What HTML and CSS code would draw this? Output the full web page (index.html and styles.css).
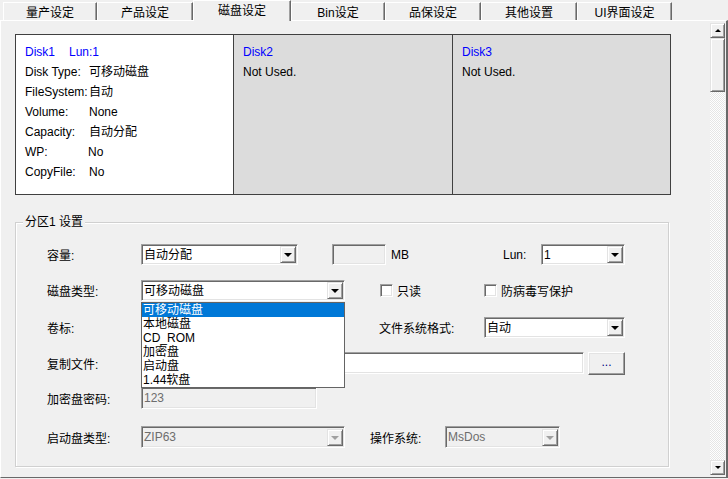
FILE: index.html
```html
<!DOCTYPE html>
<html lang="zh-CN">
<head>
<meta charset="utf-8">
<title>磁盘设定</title>
<link rel="stylesheet" href="styles.css">
</head>
<body>
<div class="window">
  <div class="tabs">
    <div class="tab w94">量产设定</div>
    <div class="tab w96">产品设定</div>
    <div class="tab active w98">磁盘设定</div>
    <div class="tab w94">Bin设定</div>
    <div class="tab w96">品保设定</div>
    <div class="tab w96">其他设置</div>
    <div class="tab w95">UI界面设定</div>
  </div>
  <div class="page">
    <div class="content">
      <div class="disks">
        <div class="disk disk-on">
          <div class="line blue"><span class="d1">Disk1</span>Lun:1</div>
          <div class="line"><span class="k">Disk Type:</span>可移动磁盘</div>
          <div class="line"><span class="k">FileSystem:</span>自动</div>
          <div class="line"><span class="k">Volume:</span>None</div>
          <div class="line"><span class="k">Capacity:</span>自动分配</div>
          <div class="line"><span class="k k2">WP:</span>No</div>
          <div class="line"><span class="k">CopyFile:</span>No</div>
        </div>
        <div class="disk disk-off">
          <div class="line blue">Disk2</div>
          <div class="line">Not Used.</div>
        </div>
        <div class="disk disk-off">
          <div class="line blue">Disk3</div>
          <div class="line">Not Used.</div>
        </div>
      </div>

      <div class="group">
        <div class="group-title">分区1 设置</div>

        <div class="row r1">
          <span class="lbl">容量:</span>
          <div class="combo w157"><span class="val">自动分配</span><span class="btn"><i class="tri"></i></span></div>
          <div class="edit disabled w54 gap34"></div>
          <span class="mb">MB</span>
          <span class="lun">Lun:</span>
          <div class="combo w84"><span class="val">1</span><span class="btn"><i class="tri"></i></span></div>
        </div>

        <div class="row r2">
          <span class="lbl">磁盘类型:</span>
          <div class="combo w204 has-list">
            <span class="val">可移动磁盘</span><span class="btn"><i class="tri"></i></span>
            <ul class="list">
              <li class="sel">可移动磁盘</li>
              <li>本地磁盘</li>
              <li>CD_ROM</li>
              <li>加密盘</li>
              <li>启动盘</li>
              <li>1.44软盘</li>
            </ul>
          </div>
          <span class="chk c1"></span><span class="ctext">只读</span>
          <span class="chk c2"></span><span class="ctext">防病毒写保护</span>
        </div>

        <div class="row r3">
          <span class="lbl">卷标:</span>
          <div class="edit w176"></div>
          <span class="lbl2">文件系统格式:</span>
          <div class="combo w141"><span class="val">自动</span><span class="btn"><i class="tri"></i></span></div>
        </div>

        <div class="row r4">
          <span class="lbl">复制文件:</span>
          <div class="edit w443 tall"></div>
          <div class="pbtn">...</div>
        </div>

        <div class="row r5">
          <span class="lbl">加密盘密码:</span>
          <div class="edit disabled w176 tall"><span class="val">123</span></div>
        </div>

        <div class="row r6">
          <span class="lbl">启动盘类型:</span>
          <div class="combo disabled w204 tall"><span class="val">ZIP63</span><span class="btn"><i class="tri"></i></span></div>
          <span class="lbl3">操作系统:</span>
          <div class="combo disabled w115 tall"><span class="val">MsDos</span><span class="btn"><i class="tri"></i></span></div>
        </div>
      </div>
    </div>

    <div class="scrollbar">
      <div class="sb-btn"><i class="arr up"></i></div>
      <div class="sb-thumb"></div>
      <div class="sb-track"></div>
      <div class="sb-btn"><i class="arr down"></i></div>
    </div>
  </div>
</div>
</body>
</html>
```

FILE: styles.css
```css
* { box-sizing: border-box; }
body {
  margin: 0;
  background: #f0f0f0;
  font: 12px "Liberation Sans", "Noto Sans CJK SC", sans-serif;
  color: #000;
}
.window { width: 728px; height: 479px; overflow: hidden; }

/* tabs */
.tabs {
  display: flex;
  align-items: flex-end;
  height: 20px;
  padding-left: 3px;
}
.tab {
  height: 18px;
  line-height: 18px;
  padding-top: 1px;
  text-align: center;
  font-size: 12px;
  background: #f0f0f0;
  border-top: 1px solid #fff;
  border-left: 1px solid #fff;
  border-right: 1px solid #696969;
  box-shadow: inset -1px 0 0 #a0a0a0;
}
.tab.active {
  height: 21px;
  line-height: 18px;
  margin-bottom: -1px;
  position: relative;
  z-index: 2;
}
.w94 { width: 94px; }
.w95 { width: 95px; }
.w96 { width: 96px; }
.w98 { width: 98px; }

/* page */
.page {
  display: flex;
  height: 458px;
  border-top: 1px solid #fff;
  border-left: 1px solid #fff;
  border-right: 2px solid #696969;
  border-bottom: 1px solid #696969;
}
.content { flex: 1; padding: 13px 0 0 14px; }

/* disks */
.disks {
  display: grid;
  grid-template-columns: 217px 219px 218px;
  width: 656px;
  height: 161px;
  border: 1px solid #404040;
}
.disk { padding: 7px 0 0 9px; }
.disk-on { background: #fff; }
.disk-off { background: #dcdcdc; border-left: 1px solid #404040; }
.line { height: 20px; line-height: 20px; white-space: nowrap; }
.blue { color: #0000ff; }
.d1 { display: inline-block; width: 44px; }
.k { display: inline-block; width: 64px; }
.k2 { width: 63px; }

/* group box */
.group {
  margin-top: 27px;
  width: 654px;
  height: 245px;
  border: 1px solid #d0d0d0;
  box-shadow: 1px 1px 0 #fff, inset 1px 1px 0 #fff;
  padding-left: 31px;
}
.group-title {
  display: block;
  width: max-content;
  margin: -8px 0 0 -24px;
  padding: 0 2px;
  height: 14px;
  line-height: 14px;
  background: #f0f0f0;
}

.row {
  display: flex;
  align-items: center;
  height: 21px;
  white-space: nowrap;
}
.r1 { margin-top: 15px; }
.r2 { margin-top: 15px; position: relative; z-index: 3; }
.r3 { margin-top: 16px; }
.r4 { margin-top: 14px; height: 22px; }
.r5 { margin-top: 13px; height: 22px; }
.r6 { margin-top: 17px; height: 22px; }

.lbl { width: 94px; flex: none; }
.gap34 { margin-left: 34px; }
.mb { margin-left: 5px; width: 112px; flex: none; }
.lun { width: 38px; flex: none; }
.lbl2 { margin-left: 62px; width: 105px; flex: none; }
.lbl3 { margin-left: 25px; width: 75px; flex: none; }

/* sunken controls */
.combo, .edit {
  position: relative;
  flex: none;
  height: 21px;
  background: #fff;
  border: 1px solid;
  border-color: #a0a0a0 #fff #fff #a0a0a0;
  box-shadow: inset 1px 1px 0 #696969, inset -1px -1px 0 #e3e3e3;
  display: flex;
  align-items: center;
}
.tall { height: 22px; }
.disabled { background: #f0f0f0; color: #6d6d6d; }
.val { padding-left: 2px; line-height: 16px; flex: 1; }
.btn {
  flex: none;
  width: 16px;
  height: 17px;
  margin-right: 1px;
  background: #f0f0f0;
  border: 1px solid;
  border-color: #e3e3e3 #696969 #696969 #e3e3e3;
  box-shadow: inset 1px 1px 0 #fff, inset -1px -1px 0 #a0a0a0;
  display: flex;
  align-items: center;
  justify-content: center;
}
.tri {
  width: 0;
  height: 0;
  border-left: 4px solid transparent;
  border-right: 4px solid transparent;
  border-top: 4px solid #000;
  margin-top: 1px;
}
.disabled .tri { border-top-color: #a0a0a0; }

.w54 { width: 54px; }
.w84 { width: 84px; }
.w115 { width: 115px; }
.w141 { width: 141px; }
.w157 { width: 157px; }
.w176 { width: 176px; }
.w204 { width: 204px; }
.w443 { width: 443px; }

/* dropdown list */
.list {
  position: absolute;
  left: -1px;
  top: 21px;
  width: 204px;
  margin: 0;
  padding: 0;
  list-style: none;
  background: #fff;
  border: 1px solid #646464;
}
.list li {
  height: 14px;
  line-height: 14px;
  padding-left: 1px;
  font-size: 12px;
  overflow: hidden;
}
.list li.sel { background: #0078d7; color: #fff; }

/* checkboxes */
.chk {
  flex: none;
  width: 13px;
  height: 13px;
  background: #fff;
  border: 1px solid;
  border-color: #a0a0a0 #fff #fff #a0a0a0;
  box-shadow: inset 1px 1px 0 #696969, inset -1px -1px 0 #e3e3e3;
}
.c1 { margin-left: 35px; }
.c2 { margin-left: 63px; }
.ctext { margin-left: 4px; }
.c1 + .ctext { width: 24px; }

/* push button */
.pbtn {
  flex: none;
  margin-left: 4px;
  width: 37px;
  height: 23px;
  background: #f0f0f0;
  border: 1px solid;
  border-color: #fff #696969 #696969 #fff;
  box-shadow: inset -1px -1px 0 #a0a0a0, inset 1px 1px 0 #e3e3e3;
  text-align: center;
  line-height: 18px;
  color: #000080;
}

/* scrollbar */
.scrollbar {
  width: 15px;
  margin: 2px 1px 2px 0;
  display: flex;
  flex-direction: column;
}
.sb-btn, .sb-thumb {
  background: #f0f0f0;
  border: 1px solid;
  border-color: #e3e3e3 #696969 #696969 #e3e3e3;
  box-shadow: inset 1px 1px 0 #fff, inset -1px -1px 0 #a0a0a0;
}
.sb-btn {
  height: 15px;
  display: flex;
  align-items: center;
  justify-content: center;
}
.sb-thumb { height: 54px; }
.sb-track {
  flex: 1;
  background: repeating-conic-gradient(#ffffff 0 25%, #e6e6e6 0 50%) 0 0 / 2px 2px;
}
.arr {
  width: 0;
  height: 0;
  border-left: 3px solid transparent;
  border-right: 3px solid transparent;
}
.arr.up { border-bottom: 3px solid #000; }
.arr.down { border-top: 3px solid #000; }
```
